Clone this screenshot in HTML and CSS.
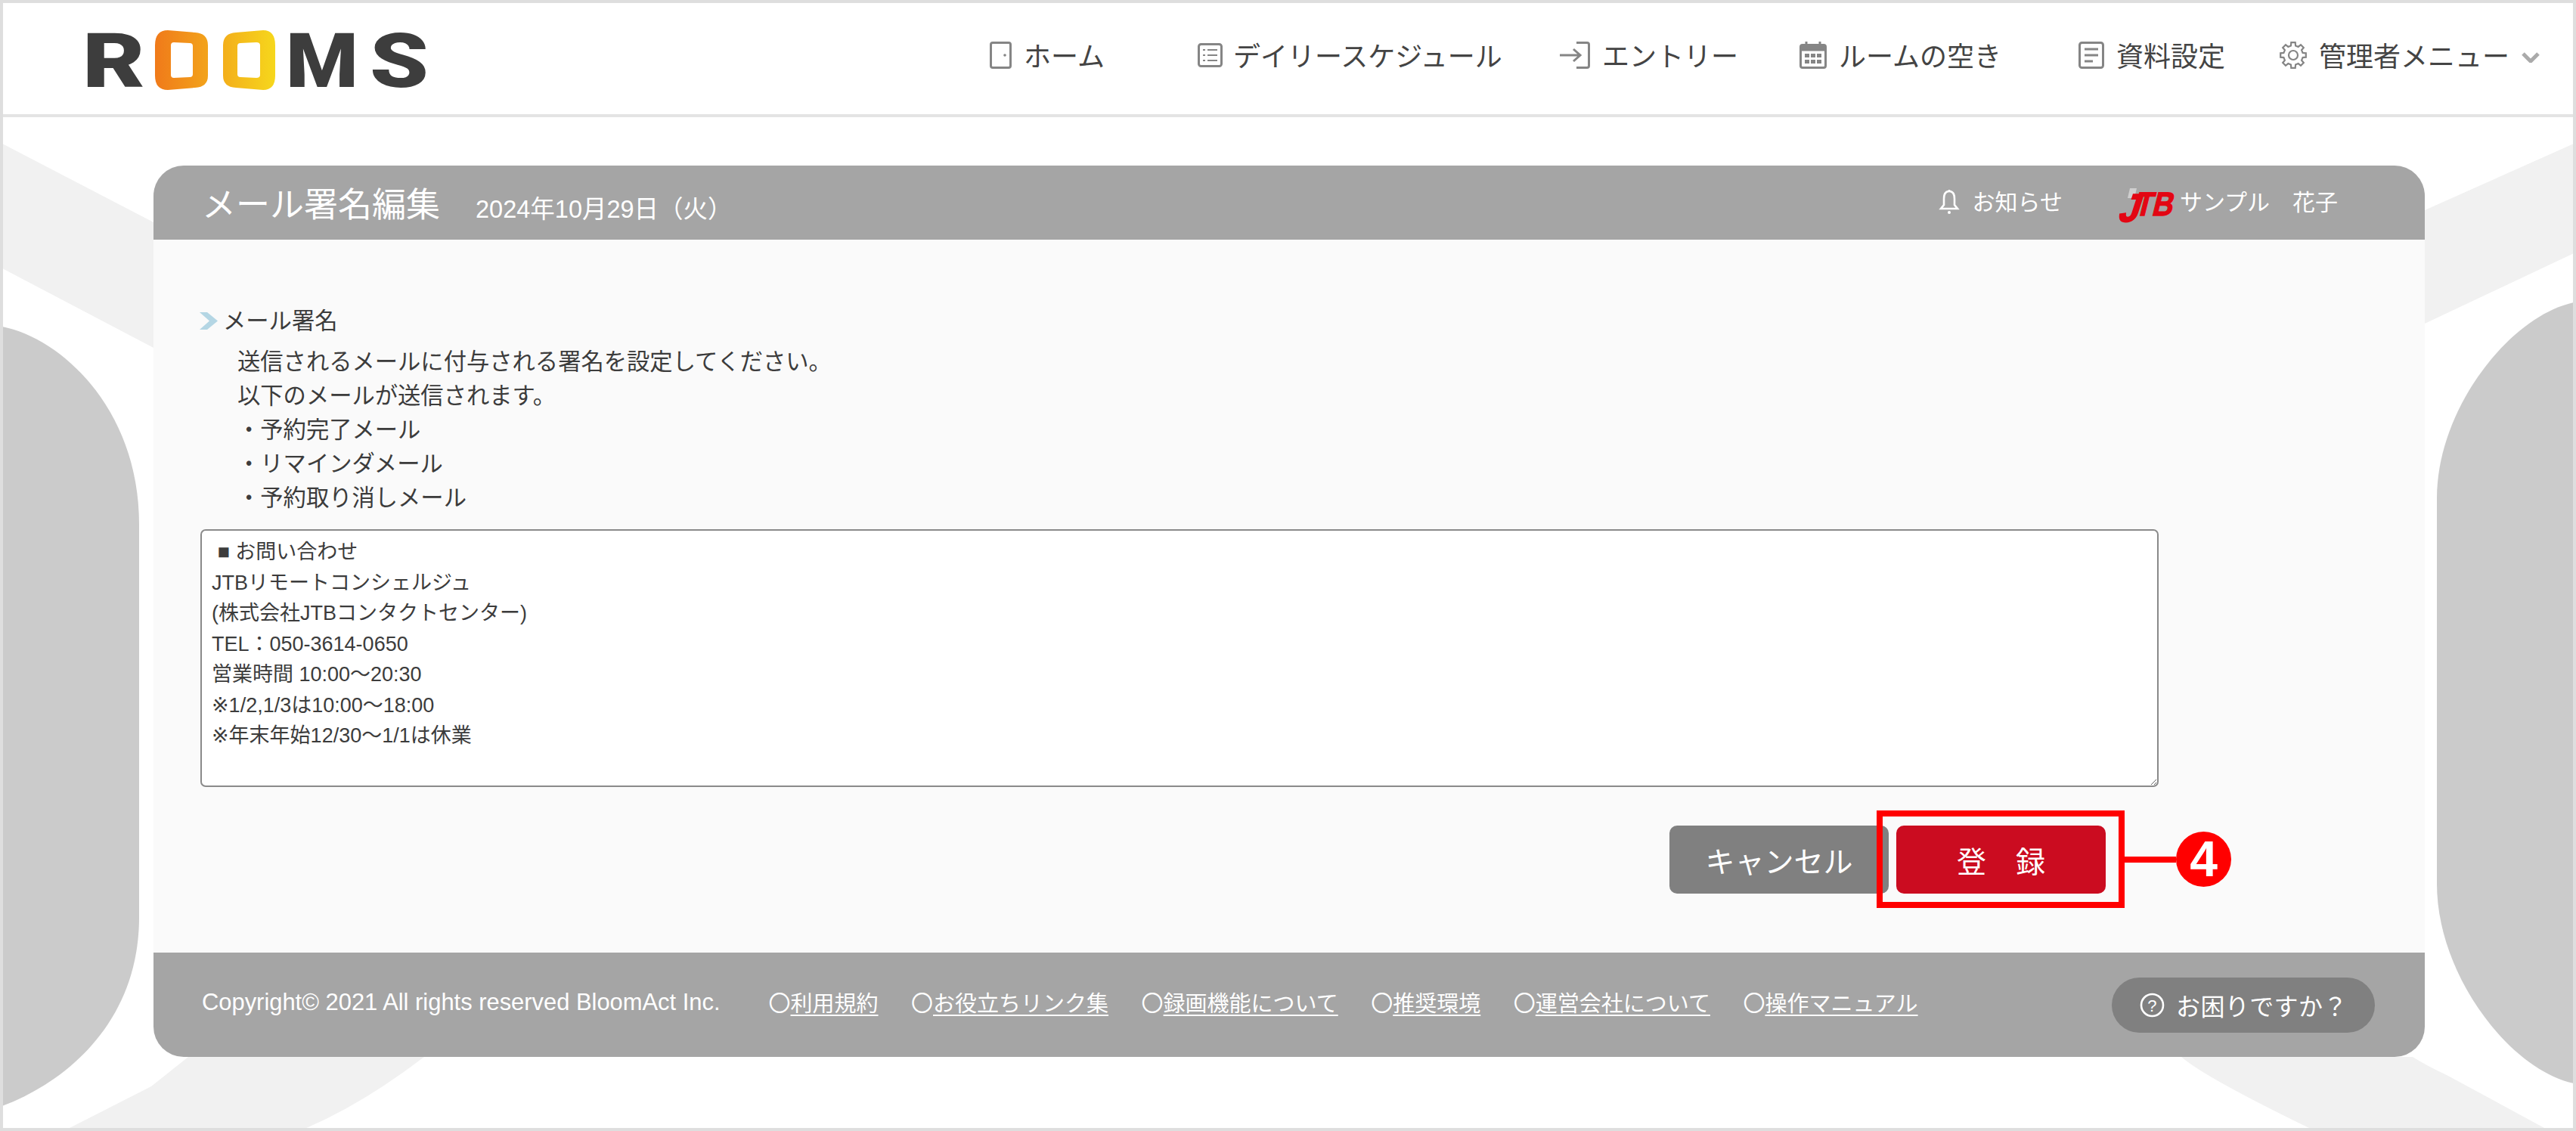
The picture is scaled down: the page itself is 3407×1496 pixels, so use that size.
FILE: index.html
```html
<!DOCTYPE html>
<html lang="ja">
<head>
<meta charset="utf-8">
<title>メール署名編集</title>
<link rel="stylesheet" href="styles.css">
</head>
<body>
<div class="frame">
  <svg class="backdrop" viewBox="4 4 3399 1488" width="3399" height="1488" aria-hidden="true">
    <path class="band" d="M3 190 L203 294 V460 L3 355 Z"/>
    <path class="band" d="M3404 190 L3207 278 V428 L3404 335 Z"/>
    <path class="band" d="M90 1493 L200 1437 L249 1398 H561 Q480 1460 403 1493 Z"/>
    <path class="band" d="M2885 1398 Q2916 1425 3056 1493 H3367 L3236 1422 Q3210 1410 3191 1398 Z"/>
    <path class="blob" d="M3 432 C80 447 184 540 184 694 V1213 C184 1350 90 1430 3 1463 Z"/>
    <path class="blob" d="M3404 400 C3320 418 3223 540 3223 659 V1169 C3223 1290 3320 1415 3404 1433 Z"/>
  </svg>

  <header class="topbar">
    <svg class="logo" viewBox="100 10 480 130" width="480" height="130" role="img" aria-label="ROOMS">
      <defs>
        <linearGradient id="logoGrad" gradientUnits="userSpaceOnUse" x1="205" y1="0" x2="364" y2="0">
          <stop offset="0" stop-color="#f07a1a"/>
          <stop offset="1" stop-color="#f6d71c"/>
        </linearGradient>
      </defs>
      <text class="logo-letter" x="109" y="115" textLength="83" lengthAdjust="spacingAndGlyphs">R</text>
      <path fill="url(#logoGrad)" fill-rule="evenodd" d="M222 40 L258 43 Q275 44 275 60 V100 Q275 115 258 116 L222 119 Q205 119 205 100 V60 Q205 40 222 40 Z M230 56 Q226 56 226 60 V99 Q226 103 230 103 L251 102 Q255 102 255 98 V61 Q255 57 251 57 Z"/>
      <path fill="url(#logoGrad)" fill-rule="evenodd" d="M312 43 L348 40 Q364 40 364 60 V100 Q364 119 348 119 L312 116 Q295 115 295 100 V60 Q295 44 312 43 Z M318 57 Q314 57 314 61 V98 Q314 102 318 102 L339 103 Q344 103 344 99 V60 Q344 56 339 56 Z"/>
      <text class="logo-letter" x="378" y="115" textLength="96" lengthAdjust="spacingAndGlyphs">M</text>
      <text class="logo-letter" x="489" y="115" textLength="78" lengthAdjust="spacingAndGlyphs">S</text>
    </svg>
    <nav class="mainnav">
      <a class="navitem">
        <svg class="ico" width="29" height="36" viewBox="0 0 29 36"><rect x="1.5" y="1.5" width="26" height="33" rx="2.5" class="ico-line"/><circle cx="20" cy="18" r="1.8" class="ico-fill"/></svg>
        <span>ホーム</span>
      </a>
      <a class="navitem navitem-list">
        <svg class="ico" width="33" height="32" viewBox="0 0 33 32"><rect x="1.5" y="1.5" width="30" height="29" rx="3" class="ico-line"/><path class="ico-thin" d="M7 9h3M13 9h13M7 16h3M13 16h13M7 23h3M13 23h13"/></svg>
        <span>デイリースケジュール</span>
      </a>
      <a class="navitem navitem-entry">
        <svg class="ico" width="40" height="36" viewBox="0 0 40 36"><path class="ico-line" d="M22 1.5 H36 Q38.500 1.500 38.500 4 V32 Q38.500 34.500 36 34.500 H22"/><path class="ico-line" d="M0 18 H26 M18 10 L27 18 L18 26"/></svg>
        <span>エントリー</span>
      </a>
      <a class="navitem">
        <svg class="ico" width="36" height="36" viewBox="0 0 36 36"><rect x="1.5" y="4.500" width="33" height="30" rx="2.500" class="ico-line"/><rect x="1.500" y="4.500" width="33" height="8" class="ico-fill"/><path class="ico-line" d="M9 0V6M27 0V6"/><path class="ico-fill" d="M7 16h6v5H7zM15 16h6v5h-6zM23 16h6v5h-6zM7 24h6v5H7zM15 24h6v5h-6zM23 24h6v5h-6z"/></svg>
        <span>ルームの空き</span>
      </a>
      <a class="navitem">
        <svg class="ico" width="34" height="36" viewBox="0 0 34 36"><rect x="1.500" y="1.500" width="31" height="33" rx="3" class="ico-line"/><path class="ico-line" d="M8 10H26M8 18H26M8 26H19"/></svg>
        <span>資料設定</span>
      </a>
      <a class="navitem">
        <svg class="ico" width="36" height="36" viewBox="0 0 36 36"><path class="ico-thin" d="M30.600 14.900L34.800 15.300V20.700L30.600 21.100L29.100 24.700L31.800 28L28 31.800L24.700 29.100L21.100 30.600L20.700 34.800H15.300L14.900 30.600L11.300 29.100L8 31.800L4.200 28L6.900 24.700L5.400 21.100L1.200 20.700V15.300L5.400 14.900L6.900 11.300L4.200 8L8 4.200L11.300 6.900L14.900 5.400L15.300 1.200H20.700L21.100 5.400L24.700 6.900L28 4.200L31.800 8L29.100 11.300Z"/><circle cx="18" cy="18" r="6" class="ico-thin"/></svg>
        <span>管理者メニュー</span>
        <svg class="nav-caret" width="24" height="14" viewBox="0 0 24 14"><path d="M2 2 L12 12 L22 2" /></svg>
      </a>
    </nav>
  </header>

  <main class="stage">
    <section class="panel">
      <div class="panel-head">
        <h1 class="panel-title">メール署名編集</h1>
        <span class="panel-date">2024年10月29日（火）</span>
        <div class="panel-user">
          <svg class="bell" width="28" height="34" viewBox="0 0 28 34"><path d="M14 3 C8 3 7 8 7 13 V21 L3 26 H25 L21 21 V13 C21 8 20 3 14 3 Z M14 1 V3" /><circle cx="14" cy="31" r="2"/></svg>
          <span class="notice">お知らせ</span>
          <svg class="jtb" width="72" height="46" viewBox="0 0 72 46" role="img" aria-label="JTB">
            <path class="jtb-hi" d="M15 0 H24 L21 13 H12 Z"/>
            <text class="jtb-j" transform="translate(-2 44) skewX(-18) scale(1.2 1.3)" x="0" y="0">J</text>
            <text class="jtb-tb" transform="translate(20 36) skewX(-14)" textLength="50" lengthAdjust="spacingAndGlyphs" x="0" y="0">TB</text>
          </svg>
          <span class="username">サンプル　花子</span>
        </div>
      </div>

      <div class="panel-body">
        <h2 class="section-title">
          <svg class="section-mark" width="24" height="23" viewBox="0 0 24 23"><path d="M0 0 H10 L24 11.500 L10 23 H0 L13 11.500 Z"/></svg>
          <span>メール署名</span>
        </h2>
        <div class="section-text">
          <p>送信されるメールに付与される署名を設定してください。</p>
          <p>以下のメールが送信されます。</p>
          <p>・予約完了メール</p>
          <p>・リマインダメール</p>
          <p>・予約取り消しメール</p>
        </div>
        <textarea class="signature" spellcheck="false"> ■ お問い合わせ
JTBリモートコンシェルジュ
(株式会社JTBコンタクトセンター)
TEL：050-3614-0650
営業時間 10:00～20:30
※1/2,1/3は10:00～18:00
※年末年始12/30～1/1は休業</textarea>
        <div class="actions">
          <button class="btn btn-cancel" type="button">キャンセル</button>
          <button class="btn btn-submit" type="button">登　録</button>
          <div class="callout">
            <span class="callout-line"></span>
            <span class="callout-num">4</span>
          </div>
        </div>
      </div>

      <footer class="panel-foot">
        <span class="copyright">Copyright© 2021 All rights reserved BloomAct Inc.</span>
        <ul class="footlinks">
          <li><i>〇</i><a>利用規約</a></li>
          <li><i>〇</i><a>お役立ちリンク集</a></li>
          <li><i>〇</i><a>録画機能について</a></li>
          <li><i>〇</i><a>推奨環境</a></li>
          <li><i>〇</i><a>運営会社について</a></li>
          <li><i>〇</i><a>操作マニュアル</a></li>
        </ul>
        <a class="help">
          <svg class="help-ico" width="33" height="33" viewBox="0 0 33 33"><circle cx="16.500" cy="16.500" r="14.500"/><text x="16.500" y="24.500" text-anchor="middle">?</text></svg>
          <span>お困りですか？</span>
        </a>
      </footer>
    </section>
  </main>
</div>
</body>
</html>
```
FILE: styles.css
```css
* { box-sizing: border-box; }
html, body { margin: 0; padding: 0; background: #fff; }
body {
  font-family: "Liberation Sans", "Noto Sans CJK JP", sans-serif;
  color: #3c3c3c;
}
.frame {
  position: relative;
  width: 3407px;
  height: 1496px;
  border: 4px solid #dedede;
  overflow: hidden;
  background: #fff;
}
.backdrop { position: absolute; left: 0; top: 0; }
.band { fill: #f1f1f1; }
.blob { fill: #cbcbcb; }

/* top bar */
.topbar {
  position: relative;
  height: 151px;
  background: #fff;
  border-bottom: 4px solid #e4e4e4;
  display: flex;
  align-items: flex-start;
}
.logo { margin: 6px 0 0 96px; flex: none; }
.logo-letter {
  font-family: Roboto, "Liberation Sans", sans-serif;
  font-weight: 900;
  font-size: 100px;
  fill: #3d3d3d;
}
.mainnav {
  display: grid;
  grid-template-columns: 275px 479px 317px 369px 266px 340px;
  margin-left: 729px;
  height: 147px;
}
.navitem {
  display: flex;
  align-items: center;
  gap: 16px;
  height: 36px;
  margin-top: 51px;
  font-size: 36px;
  line-height: 36px;
  color: #444;
  white-space: nowrap;
}
.navitem span { position: relative; top: 3px; }
.navitem-list { gap: 14px; }
.navitem-entry { gap: 16px; }
.ico { flex: none; }
.ico-line { fill: none; stroke: #858585; stroke-width: 3; }
.ico-thin { fill: none; stroke: #858585; stroke-width: 2.2; }
.ico-fill { fill: #858585; }
.nav-caret { margin-left: 0; margin-top: 6px; flex: none; }
.nav-caret path { fill: none; stroke: #aaa; stroke-width: 5; }

/* panel */
.stage { position: relative; padding: 64px 0 0 199px; }
.panel {
  width: 3004px;
  border-radius: 40px;
  overflow: hidden;
  background: #fafafa;
}
.panel-head {
  height: 98px;
  background: #a5a5a5;
  color: #fff;
  display: flex;
  align-items: center;
  padding: 0 115px 0 64px;
}
.panel-title { margin: 8px 0 0; font-size: 45px; font-weight: 400; line-height: 60px; }
.panel-date { margin: 18px 0 0 47px; font-size: 32.500px; line-height: 40px; }
.panel-user { margin-left: auto; display: flex; align-items: center; margin-top: 0; }
.bell { flex: none; margin-right: 16px; margin-top: -2px; }
.bell path { fill: none; stroke: #fff; stroke-width: 2.6; }
.bell circle { fill: #fff; }
.notice { font-size: 30px; line-height: 40px; }
.jtb { flex: none; margin: 8px 9px 0 74px; overflow: visible; }
.jtb-hi { fill: #cfcfcf; }
.jtb-j, .jtb-tb {
  font-family: "Liberation Sans", sans-serif;
  font-weight: 700;
  font-size: 44px;
  fill: #e30613;
  stroke: #e30613;
  stroke-width: 1.4;
}
.jtb-j { font-size: 40px; }
.username { font-size: 30px; line-height: 40px; }

.panel-body { height: 943px; padding: 85px 0 0 62px; }
.section-title {
  display: flex;
  align-items: center;
  gap: 7px;
  margin: 0;
  height: 45px;
  font-size: 30.300px;
  font-weight: 400;
  line-height: 45px;
}
.section-mark { flex: none; margin-left: -1px; }
.section-mark path { fill: #b4d6e4; }
.section-text { margin: 9px 0 19px 49px; font-size: 30.300px; line-height: 45px; }
.section-text p { margin: 0; }
.signature {
  display: block;
  width: 2590px;
  height: 341px;
  margin: 0;
  padding: 8px 13px;
  border: 2px solid #8a8a8a;
  border-radius: 7px;
  background: #fff;
  color: #3c3c3c;
  font-family: "Liberation Sans", "DejaVu Sans", "Noto Sans CJK JP", sans-serif;
  font-size: 27px;
  line-height: 40.500px;
  outline: none;
}
.actions {
  position: relative;
  display: flex;
  gap: 10px;
  width: 577px;
  margin: 51px 0 0 1943px;
}
.btn {
  height: 90px;
  border: 0;
  border-radius: 10px;
  color: #fff;
  font-family: "Liberation Sans", "Noto Sans CJK JP", sans-serif;
  font-size: 39px;
  padding: 0;
}
.btn-cancel { width: 290px; background: #808080; }
.btn-submit { position: relative; width: 277px; background: #cb0c20; }
.btn-submit::after {
  content: "";
  position: absolute;
  left: -26px;
  right: -25px;
  top: -20px;
  bottom: -19px;
  border: 8px solid #f00;
}
.callout {
  position: absolute;
  left: 602px;
  top: 8px;
  display: flex;
  align-items: center;
  height: 73px;
}
.callout-line { width: 68px; height: 8px; background: #f00; }
.callout-num {
  width: 73px;
  height: 73px;
  border-radius: 50%;
  background: #f00;
  color: #fff;
  font-family: "Liberation Sans", sans-serif;
  font-weight: 700;
  font-size: 66px;
  line-height: 73px;
  text-align: center;
}

.panel-foot {
  height: 138px;
  background: #a5a5a5;
  color: #fff;
  display: flex;
  align-items: center;
  padding: 0 66px 0 64px;
  font-size: 29px;
}
.copyright { font-size: 30.900px; margin-top: -6px; white-space: nowrap; }
.footlinks {
  display: flex;
  gap: 43.500px;
  list-style: none;
  margin: -8px 0 0 64px;
  padding: 0;
}
.footlinks li { white-space: nowrap; }
.footlinks i { font-style: normal; font-family: "Noto Sans CJK JP", sans-serif; }
.footlinks a { text-decoration: underline; text-underline-offset: 4px; text-decoration-thickness: 2px; }
.help {
  margin-left: auto;
  display: flex;
  align-items: center;
  gap: 15px;
  width: 348px;
  height: 73px;
  padding-left: 37px;
  border-radius: 37px;
  background: #808080;
  font-size: 32px;
  letter-spacing: 0.400px;
  white-space: nowrap;
}
.help-ico { flex: none; }
.help-ico circle { fill: none; stroke: #fff; stroke-width: 2.6; }
.help-ico text { fill: #fff; font-size: 22px; font-family: "Liberation Sans", sans-serif; }
```
